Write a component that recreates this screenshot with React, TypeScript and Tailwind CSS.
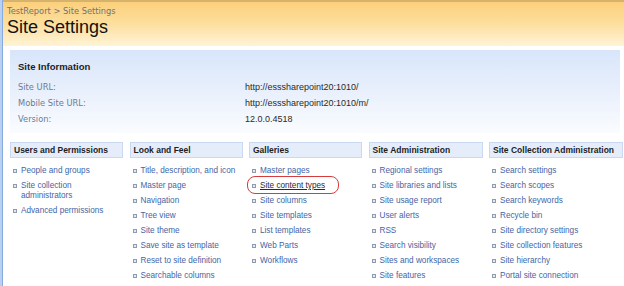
const sections = [
  {
    title: "Users and Permissions",
    items: ["People and groups", "Site collection administrators", "Advanced permissions"],
  },
  {
    title: "Look and Feel",
    items: [
      "Title, description, and icon",
      "Master page",
      "Navigation",
      "Tree view",
      "Site theme",
      "Save site as template",
      "Reset to site definition",
      "Searchable columns",
    ],
  },
  {
    title: "Galleries",
    items: ["Master pages", "Site content types", "Site columns", "Site templates", "List templates", "Web Parts", "Workflows"],
  },
  {
    title: "Site Administration",
    items: [
      "Regional settings",
      "Site libraries and lists",
      "Site usage report",
      "User alerts",
      "RSS",
      "Search visibility",
      "Sites and workspaces",
      "Site features",
      "Delete this site",
    ],
  },
  {
    title: "Site Collection Administration",
    items: [
      "Search settings",
      "Search scopes",
      "Search keywords",
      "Recycle bin",
      "Site directory settings",
      "Site collection features",
      "Site hierarchy",
      "Portal site connection",
      "Site collection audit settings",
    ],
  },
];

const info = [
  ["Site URL:", "http://esssharepoint20:1010/"],
  ["Mobile Site URL:", "http://esssharepoint20:1010/m/"],
  ["Version:", "12.0.0.4518"],
];

function Bullet() {
  return <span className="mt-[3px] inline-block h-[4px] w-[4px] shrink-0 border border-[#8e9bb1] bg-[#e3e9f2]" />;
}

function App() {
  return (
    <div className="flex h-[286px] w-[624px] overflow-hidden bg-white font-['Liberation_Sans',Arial,sans-serif]">
      <div className="w-[3px] shrink-0 border-r border-[#86abdf] bg-[#b9d0f1]" />
      <div className="flex-1">
        {/* title area */}
        <div className="h-[46px] border-t-2 border-[#d6b26c] bg-gradient-to-b from-[#fbd07c] via-[#fddf9e] to-[#fff3d6] pl-[4px]">
          <div className="pt-[4px] font-['DejaVu_Sans',Verdana,sans-serif] text-[8.3px] leading-[10px] text-[#737373]">
            TestReport &gt; Site Settings
          </div>
          <h1 className="text-[18px] leading-[22px] text-[#111]">Site Settings</h1>
        </div>

        {/* site information */}
        <div className="ml-[7px] mr-[4px] mt-[4px] h-[83px] bg-gradient-to-b from-[#d8e5fa] via-[#e9f0fc] to-[#fafcff] px-[8px] pt-[11px]">
          <div className="text-[9.5px] font-bold leading-[12px] text-[#1c1c1c]">Site Information</div>
          <div className="mt-[6px]">
            {info.map(([label, value]) => (
              <div key={label} className="grid grid-cols-[227px_1fr] leading-[16px]">
                <span className="font-['DejaVu_Sans',Verdana,sans-serif] text-[8.3px] text-[#6b7c98]">{label}</span>
                <span className="text-[9px] text-[#2a2a2a]">{value}</span>
              </div>
            ))}
          </div>
        </div>

        {/* settings columns */}
        <div className="mt-[9px] grid grid-cols-[113px_113px_113px_114px_1fr] gap-x-[6.5px] pl-[7px] pr-[1px]">
          {sections.map((s) => (
            <div key={s.title}>
              <div className="h-[16px] border border-[#cbd9f0] bg-[#e5edfa] px-[3px] text-[8.5px] font-bold leading-[14px] text-[#1e1e1e]">
                {s.title}
              </div>
              <ul className="flex flex-col gap-[5px] pt-[8px] pl-[3px]">
                {s.items.map((item) => {
                  const marked = item === "Site content types";
                  return (
                    <li key={item} className="relative flex items-start gap-[4px] text-[8.2px] leading-[10px]">
                      <Bullet />
                      <span className={marked ? "text-[#2b2b2b] underline" : "text-[#4465a6]"}>{item}</span>
                      {marked && (
                        <span className="absolute -left-[5px] -top-[5px] h-[18px] w-[92px] rounded-[8px] border-[1.5px] border-[#d63c3c]" />
                      )}
                    </li>
                  );
                })}
              </ul>
            </div>
          ))}
        </div>
      </div>
    </div>
  );
}

export default App;
